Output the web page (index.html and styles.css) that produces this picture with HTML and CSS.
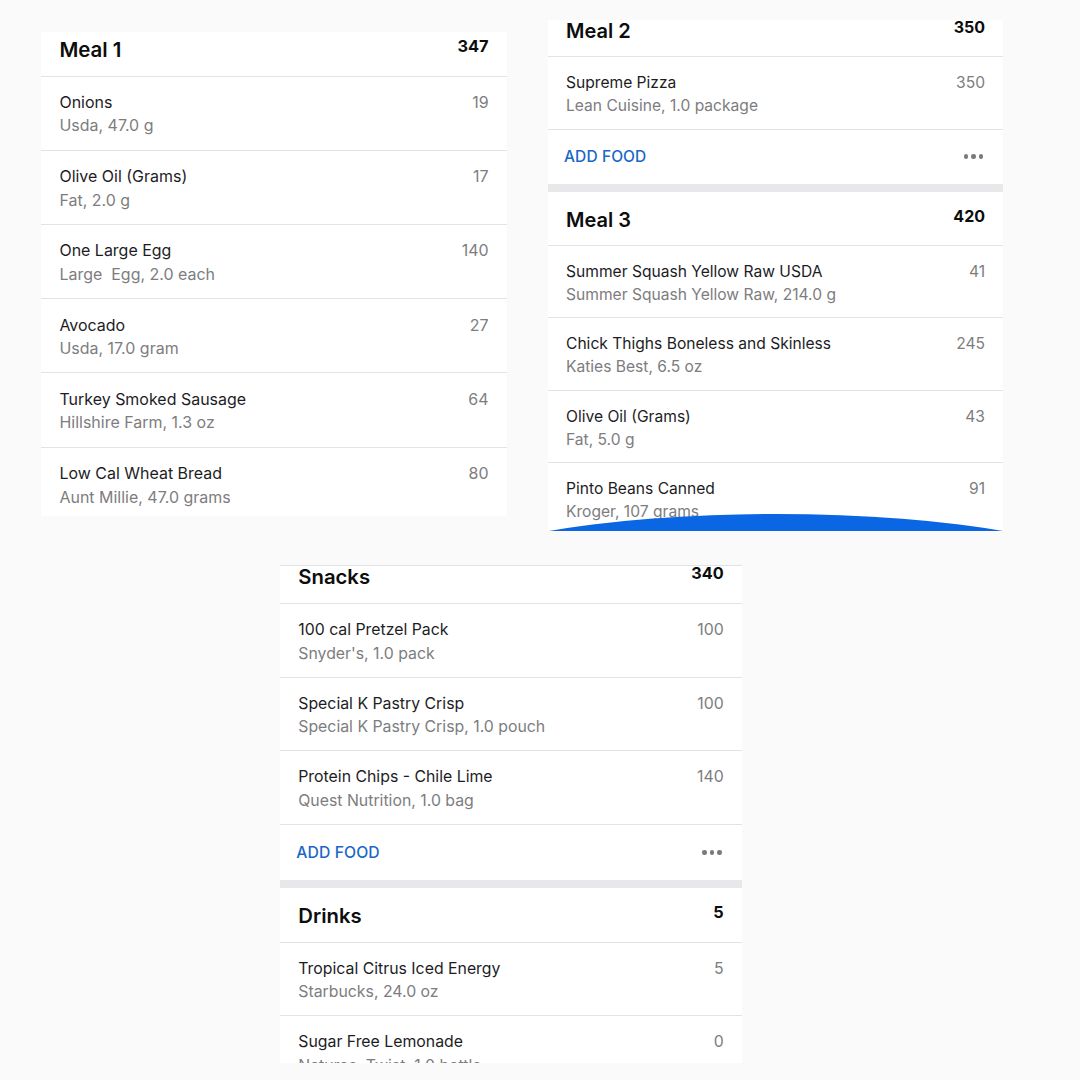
FILE: index.html
```html
<!DOCTYPE html>
<html lang="en">
<head>
<meta charset="utf-8">
<title>Food Diary</title>
<link rel="stylesheet" href="styles.css">
</head>
<body>
<main class="collage">
  <div class="row-top">
    <div class="slot slot-1">
      <section class="panel panel-1">
        <div class="inner">
          <header class="meal-head"><h2 class="meal-title">Meal 1</h2><span class="meal-total">347</span></header>
          <div class="item"><div class="item-text"><div class="item-name">Onions</div><div class="item-sub">Usda, 47.0 g</div></div><span class="item-cal">19</span></div>
          <div class="item"><div class="item-text"><div class="item-name">Olive Oil (Grams)</div><div class="item-sub">Fat, 2.0 g</div></div><span class="item-cal">17</span></div>
          <div class="item"><div class="item-text"><div class="item-name">One Large Egg</div><div class="item-sub">Large&nbsp; Egg, 2.0 each</div></div><span class="item-cal">140</span></div>
          <div class="item"><div class="item-text"><div class="item-name">Avocado</div><div class="item-sub">Usda, 17.0 gram</div></div><span class="item-cal">27</span></div>
          <div class="item"><div class="item-text"><div class="item-name">Turkey Smoked Sausage</div><div class="item-sub">Hillshire Farm, 1.3 oz</div></div><span class="item-cal">64</span></div>
          <div class="item"><div class="item-text"><div class="item-name">Low Cal Wheat Bread</div><div class="item-sub">Aunt Millie, 47.0 grams</div></div><span class="item-cal">80</span></div>
        </div>
      </section>
    </div>
    <div class="slot slot-2">
      <section class="panel panel-2">
        <div class="inner">
          <header class="meal-head"><h2 class="meal-title">Meal 2</h2><span class="meal-total">350</span></header>
          <div class="item"><div class="item-text"><div class="item-name">Supreme Pizza</div><div class="item-sub">Lean Cuisine, 1.0 package</div></div><span class="item-cal">350</span></div>
          <div class="add-row"><span class="add-food">ADD FOOD</span><span class="dots"><i></i><i></i><i></i></span></div>
          <div class="band"></div>
          <header class="meal-head"><h2 class="meal-title">Meal 3</h2><span class="meal-total">420</span></header>
          <div class="item"><div class="item-text"><div class="item-name">Summer Squash Yellow Raw USDA</div><div class="item-sub">Summer Squash Yellow Raw, 214.0 g</div></div><span class="item-cal">41</span></div>
          <div class="item"><div class="item-text"><div class="item-name">Chick Thighs Boneless and Skinless</div><div class="item-sub">Katies Best, 6.5 oz</div></div><span class="item-cal">245</span></div>
          <div class="item"><div class="item-text"><div class="item-name">Olive Oil (Grams)</div><div class="item-sub">Fat, 5.0 g</div></div><span class="item-cal">43</span></div>
          <div class="item"><div class="item-text"><div class="item-name">Pinto Beans Canned</div><div class="item-sub">Kroger, 107 grams</div></div><span class="item-cal">91</span></div>
        </div>
        <div class="arc"></div>
      </section>
    </div>
  </div>
  <div class="row-bottom">
    <div class="slot slot-3">
      <section class="panel panel-3">
        <div class="inner">
          <header class="meal-head"><h2 class="meal-title">Snacks</h2><span class="meal-total">340</span></header>
          <div class="item"><div class="item-text"><div class="item-name">100 cal Pretzel Pack</div><div class="item-sub">Snyder's, 1.0 pack</div></div><span class="item-cal">100</span></div>
          <div class="item"><div class="item-text"><div class="item-name">Special K Pastry Crisp</div><div class="item-sub">Special K Pastry Crisp, 1.0 pouch</div></div><span class="item-cal">100</span></div>
          <div class="item"><div class="item-text"><div class="item-name">Protein Chips - Chile Lime</div><div class="item-sub">Quest Nutrition, 1.0 bag</div></div><span class="item-cal">140</span></div>
          <div class="add-row"><span class="add-food">ADD FOOD</span><span class="dots"><i></i><i></i><i></i></span></div>
          <div class="band"></div>
          <header class="meal-head"><h2 class="meal-title">Drinks</h2><span class="meal-total">5</span></header>
          <div class="item"><div class="item-text"><div class="item-name">Tropical Citrus Iced Energy</div><div class="item-sub">Starbucks, 24.0 oz</div></div><span class="item-cal">5</span></div>
          <div class="item"><div class="item-text"><div class="item-name">Sugar Free Lemonade</div><div class="item-sub">Natures&nbsp; Twist, 1.0 bottle</div></div><span class="item-cal">0</span></div>
        </div>
      </section>
    </div>
  </div>
</main>
</body>
</html>
```

FILE: styles.css
```css
* { box-sizing: border-box; }

html, body {
  margin: 0;
  padding: 0;
  background: #fafafa;
}

body {
  width: 1080px;
  height: 1080px;
  overflow: hidden;
  font-family: Inter, "Noto Sans", "Liberation Sans", sans-serif;
  color: #1d1d1f;
}

.row-top {
  display: flex;
  align-items: flex-start;
  gap: 41px;
  padding-left: 41px;
}

.slot-1 { margin-top: 32px; }
.slot-2 { margin-top: 20px; }

.row-bottom {
  margin-top: 34px;
  padding-left: 280px;
}

.panel {
  position: relative;
  width: 455px;
  background: #ffffff;
  overflow: hidden;
}

.panel-1 { zoom: 1.0242; height: 472.6px; }
.panel-1 .inner { margin-top: -10.5px; }

.panel-2 { height: 511px; }
.panel-2 .inner { margin-top: -17px; }

.panel-3 { zoom: 1.0154; height: 490.5px; border-top: 1px solid #e3e3e5; }
.panel-3 .inner { margin-top: -16.5px; }

.meal-head {
  display: flex;
  justify-content: space-between;
  align-items: flex-start;
  height: 54px;
  padding: 14px 18px 0 18px;
  border-bottom: 1px solid #e3e3e5;
}

.meal-title {
  margin: 0;
  font-size: 20px;
  line-height: 28px;
  font-weight: 600;
  color: #0d0d0d;
}

.meal-total {
  padding-top: 2px;
  font-size: 16px;
  line-height: 17px;
  font-weight: 700;
  color: #0d0d0d;
}

.item {
  display: flex;
  justify-content: space-between;
  align-items: flex-start;
  padding: 14px 18px 11.5px 18px;
  border-bottom: 1px solid #e3e3e5;
}

.item-name {
  font-size: 15.6px;
  line-height: 23px;
  color: #1d1d1f;
}

.item-sub {
  font-size: 15.6px;
  line-height: 23px;
  color: #7d7d80;
}

.item-cal {
  font-size: 15.6px;
  line-height: 23px;
  color: #7d7d80;
}

.add-row {
  display: flex;
  justify-content: space-between;
  align-items: center;
  height: 54px;
  padding: 0 20px 0 16px;
}

.add-food {
  font-size: 15.5px;
  font-weight: 500;
  color: #1a66c9;
  letter-spacing: 0.1px;
}

.dots {
  display: flex;
  gap: 3px;
}

.dots i {
  display: block;
  width: 4.5px;
  height: 4.5px;
  border-radius: 50%;
  background: #7a7a7c;
}

.band {
  height: 8px;
  background: #e8e8ea;
}

.arc {
  position: absolute;
  left: 50%;
  top: 494px;
  width: 660px;
  height: 124px;
  margin-left: -330px;
  border-radius: 50%;
  background: #0b66e3;
}
```
